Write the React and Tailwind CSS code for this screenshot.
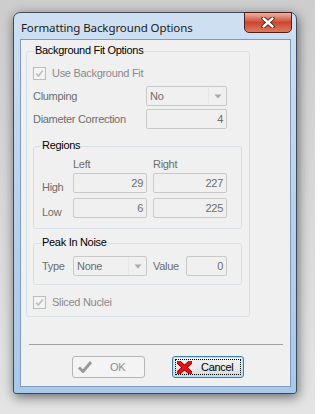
import React from "react";

const Check = () => (
  <span className="w-[13px] h-[13px] border border-[#bcbcbc] bg-[#f4f4f4] flex items-center justify-center shrink-0">
    <svg width="9" height="9" viewBox="0 0 9 9">
      <path d="M1.2 4.6 L3.4 7 L7.8 1.4" stroke="#bdbdbd" strokeWidth="1.6" fill="none" />
    </svg>
  </span>
);

const Edit = ({ value, w }) => (
  <div
    className={`${w} h-[20px] border border-[#c9c9c9] rounded-[2px] bg-[#f0f0f0] text-right pr-[3px] leading-[18px] text-[#6d6d6d]`}
  >
    {value}
  </div>
);

const Combo = ({ value, w }) => (
  <div
    className={`${w} h-[20px] border border-[#c9c9c9] rounded-[2px] bg-[#f0f0f0] flex text-[#6d6d6d]`}
  >
    <div className="flex-1 pl-[3px] leading-[18px]">{value}</div>
    <div className="w-[18px] border-l border-[#e6e6e6] flex items-center justify-center">
      <svg width="8" height="5" viewBox="0 0 8 5">
        <path d="M0.5 0.5 L7.5 0.5 L4 4.5 Z" fill="#a9a9a9" />
      </svg>
    </div>
  </div>
);

const Group = ({ title, className, children }) => (
  <div className={`relative border border-[#d5dfe5] rounded-[3px] ${className}`}>
    <span className="absolute top-[-8px] left-[7px] px-[1px] bg-[#f0f0f0] leading-[13px] text-black">
      {title}
    </span>
    {children}
  </div>
);

export default function App() {
  return (
    <div className="w-[315px] h-[414px] overflow-hidden bg-linear-to-b from-[#cdcdcd] to-[#e4e4e4] pt-[12px] pl-[13px] font-['Liberation_Sans',Arial,sans-serif] text-[11px] tracking-[-0.3px]">
      {/* window */}
      <div className="relative w-[284px] h-[382px] rounded-t-[7px] rounded-b-[3px] border border-[#3e4b59] bg-linear-to-b from-[#cfe0f2] via-[#b8d2ee] to-[#a8c8ec] shadow-[1px_3px_12px_rgba(0,0,0,0.55)] flex flex-col">
        {/* title bar */}
        <div className="h-[26px] flex items-center pl-[7px] pt-[4px] font-['Noto_Sans',sans-serif] text-[11.5px] tracking-[-0.1px] text-[#1b1b1b]">
          Formatting Background Options
        </div>
        <div className="absolute top-[-1px] right-[4px] w-[48px] h-[21px] rounded-b-[5px] border border-[#4f2018] bg-linear-to-b from-[#eab2a6] via-[#c9472f] to-[#dd7a5f] flex items-center justify-center">
          <svg width="14" height="11" viewBox="0 0 14 11">
            <path d="M2.5 1.5 L11.5 9.5 M11.5 1.5 L2.5 9.5" stroke="#3a1d18" strokeWidth="4.2" strokeLinecap="round" />
            <path d="M2.5 1.5 L11.5 9.5 M11.5 1.5 L2.5 9.5" stroke="#ffffff" strokeWidth="2.4" strokeLinecap="round" />
          </svg>
        </div>

        {/* client area */}
        <div className="flex-1 ml-[6px] mr-[5px] mb-[6px] border border-[#7f9aba] bg-[#f0f0f0] flex flex-col pl-[5px] pt-[11px]">
          <Group title="Background Fit Options" className="w-[224px] h-[266px] pl-[6px] pt-[15px] flex flex-col">
            <div className="flex items-center gap-[6px] h-[13px] text-[#8a8a8a]">
              <Check />
              <span>Use Background Fit</span>
            </div>

            <div className="flex items-center mt-[6px] text-[#6d6d6d]">
              <span className="w-[113px]">Clumping</span>
              <Combo value="No" w="w-[81px]" />
            </div>

            <div className="flex items-center mt-[3px] text-[#6d6d6d]">
              <span className="w-[113px]">Diameter Correction</span>
              <Edit value="4" w="w-[81px]" />
            </div>

            <Group title="Regions" className="mt-[17px] w-[209px] h-[83px] pl-[8px] pt-[11px] text-[#6d6d6d]">
              <div className="flex h-[13px] leading-[13px]">
                <span className="w-[31px]"></span>
                <span className="w-[80px]">Left</span>
                <span>Right</span>
              </div>
              <div className="flex mt-[2px]">
                <span className="w-[31px] mt-[8px] leading-[13px]">High</span>
                <Edit value="29" w="w-[74px]" />
                <div className="w-[6px]"></div>
                <Edit value="227" w="w-[74px]" />
              </div>
              <div className="flex mt-[4px]">
                <span className="w-[31px] mt-[8px] leading-[13px]">Low</span>
                <Edit value="6" w="w-[74px]" />
                <div className="w-[6px]"></div>
                <Edit value="225" w="w-[74px]" />
              </div>
            </Group>

            <Group title="Peak In Noise" className="mt-[14px] w-[209px] h-[42px] pl-[8px] pt-[12px] text-[#6d6d6d]">
              <div className="flex items-center">
                <span className="w-[31px]">Type</span>
                <Combo value="None" w="w-[74px]" />
                <span className="ml-[6px] w-[33px]">Value</span>
                <Edit value="0" w="w-[41px]" />
              </div>
            </Group>

            <div className="flex items-center gap-[6px] h-[13px] mt-[11px] text-[#8a8a8a]">
              <Check />
              <span>Sliced Nuclei</span>
            </div>
          </Group>

          <div className="mt-[27px] ml-[3px] w-[254px] h-px bg-[#a0a0a0]"></div>

          <div className="flex mt-[11px] ml-[46px] gap-[27px]">
            <div className="w-[73px] h-[22px] border border-[#b2b6b9] rounded-[3px] bg-[#f4f4f4] flex items-center text-[#8d8d8d]">
              <svg className="ml-[4px]" width="16" height="14" viewBox="0 0 16 14">
                <path d="M2 7.5 L6 11.5 L14 2" stroke="#9a9a9a" strokeWidth="3" fill="none" strokeLinejoin="round" />
              </svg>
              <span className="ml-[17px]">OK</span>
            </div>
            <div className="w-[72px] h-[22px] border border-[#3c7fb1] rounded-[3px] bg-linear-to-b from-[#f3f3f3] via-[#ebebeb] to-[#d5d5d5] p-[2px] shadow-[inset_0_0_0_1px_#b6e2f9]">
              <div className="w-full h-full border border-dotted border-black flex items-center text-black">
                <svg className="ml-[1px]" width="15" height="13" viewBox="0 0 15 13">
                  <path d="M2 1.5 L13 11.5 M13 1.5 L2 11.5" stroke="#7a0000" strokeWidth="4.4" strokeLinecap="square" />
                  <path d="M2 1.5 L13 11.5 M13 1.5 L2 11.5" stroke="#ee1010" strokeWidth="3" strokeLinecap="square" />
                </svg>
                <span className="ml-[9px]">Cancel</span>
              </div>
            </div>
          </div>
        </div>
      </div>
    </div>
  );
}
